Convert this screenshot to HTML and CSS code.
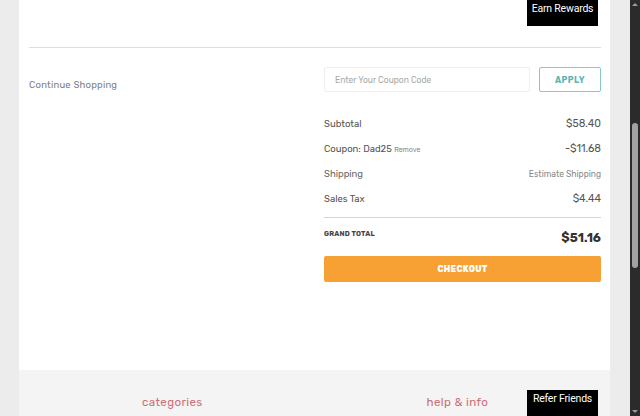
FILE: index.html
```html
<!DOCTYPE html>
<html>
<head>
<meta charset="utf-8">
<link rel="stylesheet" href="styles.css">
</head>
<body>
<div class="wrap">
  <div class="main">
    <div class="top"></div>
    <div class="rule"></div>
    <div class="cart">
      <div class="left"><span class="continue">Continue Shopping</span></div>
      <div class="summary">
        <div class="coupon">
          <div class="input">Enter Your Coupon Code</div>
          <div class="apply">APPLY</div>
        </div>
        <div class="row r1"><span>Subtotal</span><span class="val">$58.40</span></div>
        <div class="row"><span>Coupon: Dad25 <small class="remove">Remove</small></span><span class="val">-$11.68</span></div>
        <div class="row"><span class="muted">Shipping</span><span class="val est">Estimate Shipping</span></div>
        <div class="row"><span>Sales Tax</span><span class="val">$4.44</span></div>
        <div class="line"></div>
        <div class="grand"><span class="glabel">GRAND TOTAL</span><span class="gval">$51.16</span></div>
        <div class="checkout">CHECKOUT</div>
      </div>
    </div>
    <div class="footer">
      <div class="fcol c1">categories</div>
      <div class="fcol c2">help &amp; info</div>
    </div>
  </div>
  <div class="gutter"></div>
  <div class="scrollbar">
    <div class="arrow up"></div>
    <div class="track"><div class="thumb"></div></div>
    <div class="arrow down"></div>
  </div>
  <div class="badge earn">Earn Rewards</div>
  <div class="badge refer">Refer Friends</div>
</div>
</body>
</html>
```
FILE: styles.css
```css
html, body { margin: 0; padding: 0; }
body {
  background: #ececec;
  font-family: "Rubik", "Inter", "Noto Sans", sans-serif;
  width: 640px; height: 416px; overflow: hidden;
}
.wrap {
  position: relative;
  display: flex;
  height: 416px;
}
.main {
  margin-left: 19px;
  width: 591px;
  background: #fff;
  display: flex;
  flex-direction: column;
}
.top { height: 47px; }
.rule {
  margin: 0 9px 0 10px;
  height: 1px;
  background: #dedede;
}
.cart {
  display: flex;
  justify-content: space-between;
  padding: 19px 9px 0 10px;
  height: 322px;
  box-sizing: border-box;
}
.left { padding-top: 10px; line-height: 12px; }
.continue {
  font-size: 9.5px;
  color: #808080;
  letter-spacing: 0.2px;
}
.summary { width: 277px; }
.coupon { display: flex; gap: 9px; height: 25px; }
.input {
  flex: 1;
  border: 1px solid #efefef;
  border-radius: 2px;
  font-size: 8.5px;
  color: #a8a8a8;
  padding-left: 10px;
  display: flex; align-items: center;
}
.apply {
  width: 60px;
  border: 1px solid #8cc6c6;
  border-radius: 2px;
  color: #5bb4b4;
  font-size: 8.5px;
  font-weight: 700;
  letter-spacing: 0.5px;
  display: flex; align-items: center; justify-content: center;
}
.row {
  display: flex;
  justify-content: space-between;
  align-items: center;
  height: 25px;
  font-size: 9.5px;
  color: #555;
}
.r1 { margin-top: 19px; }
.val { font-size: 10.5px; color: #555; }
.est { font-size: 8.5px; color: #888; }
.muted { color: #666; }
.remove { font-size: 7px; color: #888; }
.line { height: 1px; background: #d4d4d4; margin-top: 6px; }
.grand {
  display: flex; justify-content: space-between;
  height: 38px;
  padding-top: 11px;
  box-sizing: border-box;
}
.glabel { font-size: 7px; font-weight: 700; color: #444; letter-spacing: 0.2px; }
.gval { font-size: 12.5px; font-weight: 700; color: #333; margin-top: 1px; }
.checkout {
  height: 26px;
  background: #f7a033;
  border-radius: 2px;
  color: #fff;
  font-size: 8.5px;
  font-weight: 800;
  letter-spacing: 0.3px;
  display: flex; align-items: center; justify-content: center;
}
.footer {
  flex: 1;
  background: #f4f4f4;
  position: relative;
  display: flex;
  padding-top: 25px;
}
.fcol { font-size: 11.5px; color: #cd6e78; letter-spacing: 0.4px; }
.c1 { margin-left: 123px; }
.c2 { margin-left: 224px; }
.gutter { width: 20px; }
.scrollbar {
  width: 10px;
  background: #2b2b2b;
  display: flex; flex-direction: column;
}
.arrow { height: 10px; position: relative; }
.arrow::after {
  content: ""; position: absolute; left: 2px;
  border-left: 3px solid transparent; border-right: 3px solid transparent;
}
.arrow.up::after { top: 3px; border-bottom: 3px solid #9a9a9a; }
.arrow.down::after { top: 4px; border-top: 3px solid #9a9a9a; }
.track { flex: 1; padding: 113px 2px 0 2px; }
.thumb { height: 145px; background: #a2a2a2; border-radius: 3px; }
.badge {
  position: absolute;
  left: 527px;
  width: 71px;
  height: 26px;
  background: #000;
  color: #fff;
  font-family: "Roboto", sans-serif;
  font-size: 10.5px;
  letter-spacing: -0.2px;
  text-align: center;
  box-sizing: border-box;
}
.earn { top: 0; padding-top: 2px; }
.refer { top: 390px; padding-top: 2px; }
```
